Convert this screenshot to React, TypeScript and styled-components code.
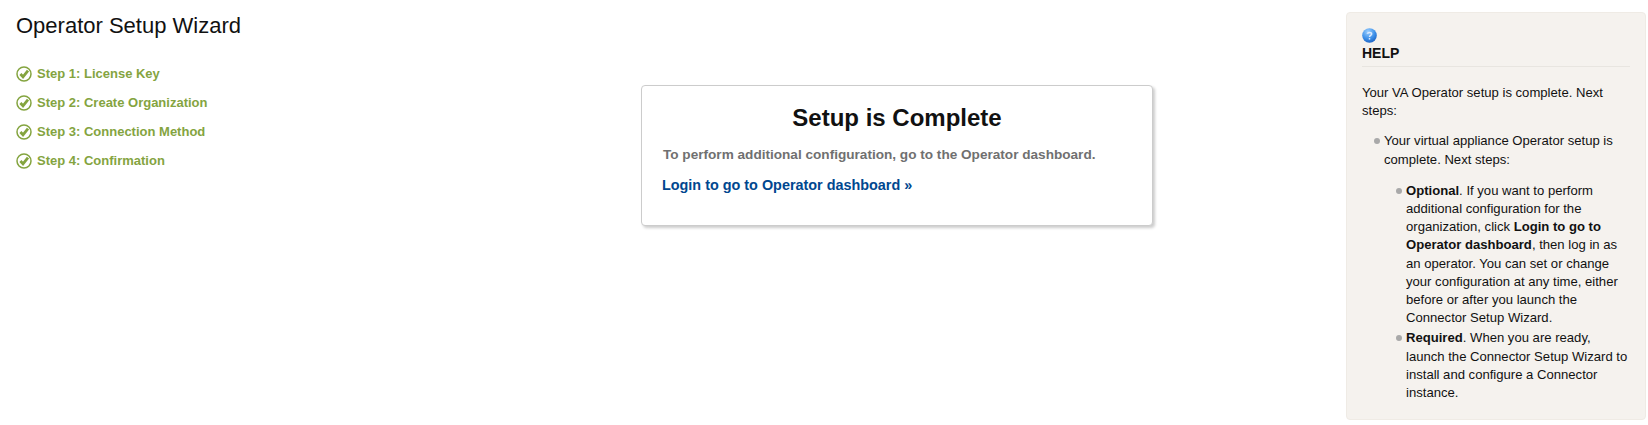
import styled, { createGlobalStyle } from 'styled-components'

const GlobalStyle = createGlobalStyle`
  html, body {
    margin: 0;
    padding: 0;
    background: #fff;
    font-family: "Liberation Sans", Arial, sans-serif;
  }
`

const Page = styled.div`
  display: grid;
  grid-template-columns: 641px 512px 193px 300px;
  width: 1648px;
  height: 425px;
  overflow: hidden;
  box-sizing: border-box;
`

const Sidebar = styled.div`
  padding: 13px 0 0 16px;
`

const Title = styled.h1`
  margin: 0 0 20px;
  font-size: 22px;
  line-height: 26px;
  font-weight: normal;
  color: #111;
`

const Steps = styled.ul`
  list-style: none;
  margin: 0;
  padding: 0;
`

const Step = styled.li`
  display: flex;
  align-items: center;
  gap: 5px;
  height: 29px;
  font-size: 13px;
  font-weight: bold;
  color: #84a43f;
`

const Card = styled.div`
  align-self: start;
  margin-top: 85px;
  height: 141px;
  box-sizing: border-box;
  padding: 18px 20px 0;
  background: #fff;
  border: 1px solid #ccc;
  border-radius: 4px;
  box-shadow: 2px 2px 3px rgba(0, 0, 0, 0.2);
`

const CardTitle = styled.h2`
  margin: 0 0 15px;
  font-size: 24px;
  line-height: 28px;
  font-weight: bold;
  text-align: center;
  color: #111;
`

const CardText = styled.p`
  margin: 0 0 13px;
  padding-left: 1px;
  font-size: 13.6px;
  line-height: 16px;
  font-weight: bold;
  color: #707070;
`

const LoginLink = styled.a`
  font-size: 14.4px;
  line-height: 16px;
  font-weight: bold;
  color: #00478f;
  text-decoration: none;
`

const HelpPanel = styled.aside`
  grid-column: 4;
  align-self: start;
  margin-top: 12px;
  height: 408px;
  box-sizing: border-box;
  padding: 15px 15px 0 15px;
  background: #f5f2ee;
  border: 1px solid #efebe5;
  border-radius: 4px;
  font-size: 13.1px;
  line-height: 18.2px;
  color: #111;
`

const HelpHeader = styled.div`
  padding-bottom: 5px;
  margin-bottom: 17px;
  border-bottom: 1px solid #e8e5e0;
`

const HelpIcon = styled.svg`
  display: block;
  width: 15px;
  height: 15px;
  margin-bottom: 2px;
`

const HelpTitle = styled.div`
  font-size: 14px;
  line-height: 16px;
  font-weight: bold;
`

const HelpText = styled.p`
  margin: 0 0 12px;
`

const BulletList = styled.ul`
  list-style: none;
  margin: 0;
  padding: 0 0 0 22px;
`

const NestedList = styled(BulletList)`
  margin-top: 13px;
`

const Bullet = styled.li`
  position: relative;

  & + & {
    margin-top: 2px;
  }

  &::before {
    content: '';
    position: absolute;
    left: -10px;
    top: 6px;
    width: 6px;
    height: 6px;
    border-radius: 50%;
    background: #a9a9a9;
  }
`

const CheckIcon = () => (
  <svg width="16" height="16" viewBox="0 0 16 16" fill="none">
    <circle cx="8" cy="8" r="7" stroke="#84a43f" strokeWidth="1.5" />
    <path d="M4.4 8 7 10.8 12 4.6" stroke="#84a43f" strokeWidth="2.8" />
  </svg>
)

const QuestionIcon = () => (
  <HelpIcon viewBox="0 0 14 14">
    <defs>
      <radialGradient id="helpBlue" cx="0.4" cy="0.25" r="0.8">
        <stop offset="0" stopColor="#9cd0ff" />
        <stop offset="0.6" stopColor="#3c8fe8" />
        <stop offset="1" stopColor="#1b5fc0" />
      </radialGradient>
    </defs>
    <circle cx="7" cy="7" r="6.8" fill="url(#helpBlue)" />
    <path
      d="M5 5.4C5 4 9 3.8 9 5.6 9 7 7 6.8 7 8.4"
      fill="none"
      stroke="#dceaff"
      strokeWidth="1.4"
    />
    <rect x="6.3" y="9.4" width="1.4" height="1.4" fill="#dceaff" />
  </HelpIcon>
)

const steps = ['Step 1: License Key', 'Step 2: Create Organization', 'Step 3: Connection Method', 'Step 4: Confirmation']

const App = () => {
  return (
    <Page>
      <GlobalStyle />
      <Sidebar>
        <Title>Operator Setup Wizard</Title>
        <Steps>
          {steps.map((s) => (
            <Step key={s}>
              <CheckIcon />
              {s}
            </Step>
          ))}
        </Steps>
      </Sidebar>
      <Card>
        <CardTitle>Setup is Complete</CardTitle>
        <CardText>To perform additional configuration, go to the Operator dashboard.</CardText>
        <LoginLink href="#">Login to go to Operator dashboard »</LoginLink>
      </Card>
      <HelpPanel>
        <HelpHeader>
          <QuestionIcon />
          <HelpTitle>HELP</HelpTitle>
        </HelpHeader>
        <HelpText>Your VA Operator setup is complete. Next steps:</HelpText>
        <BulletList>
          <Bullet>
            <div>Your virtual appliance Operator setup is complete. Next steps:</div>
            <NestedList>
              <Bullet>
                <b>Optional</b>. If you want to perform additional configuration for the organization, click{' '}
                <b>Login to go to Operator dashboard</b>, then log in as an operator. You can set or change your
                configuration at any time, either before or after you launch the Connector Setup Wizard.
              </Bullet>
              <Bullet>
                <b>Required</b>. When you are ready, launch the Connector Setup Wizard to install and configure a
                Connector instance.
              </Bullet>
            </NestedList>
          </Bullet>
        </BulletList>
      </HelpPanel>
    </Page>
  )
}

export default App
